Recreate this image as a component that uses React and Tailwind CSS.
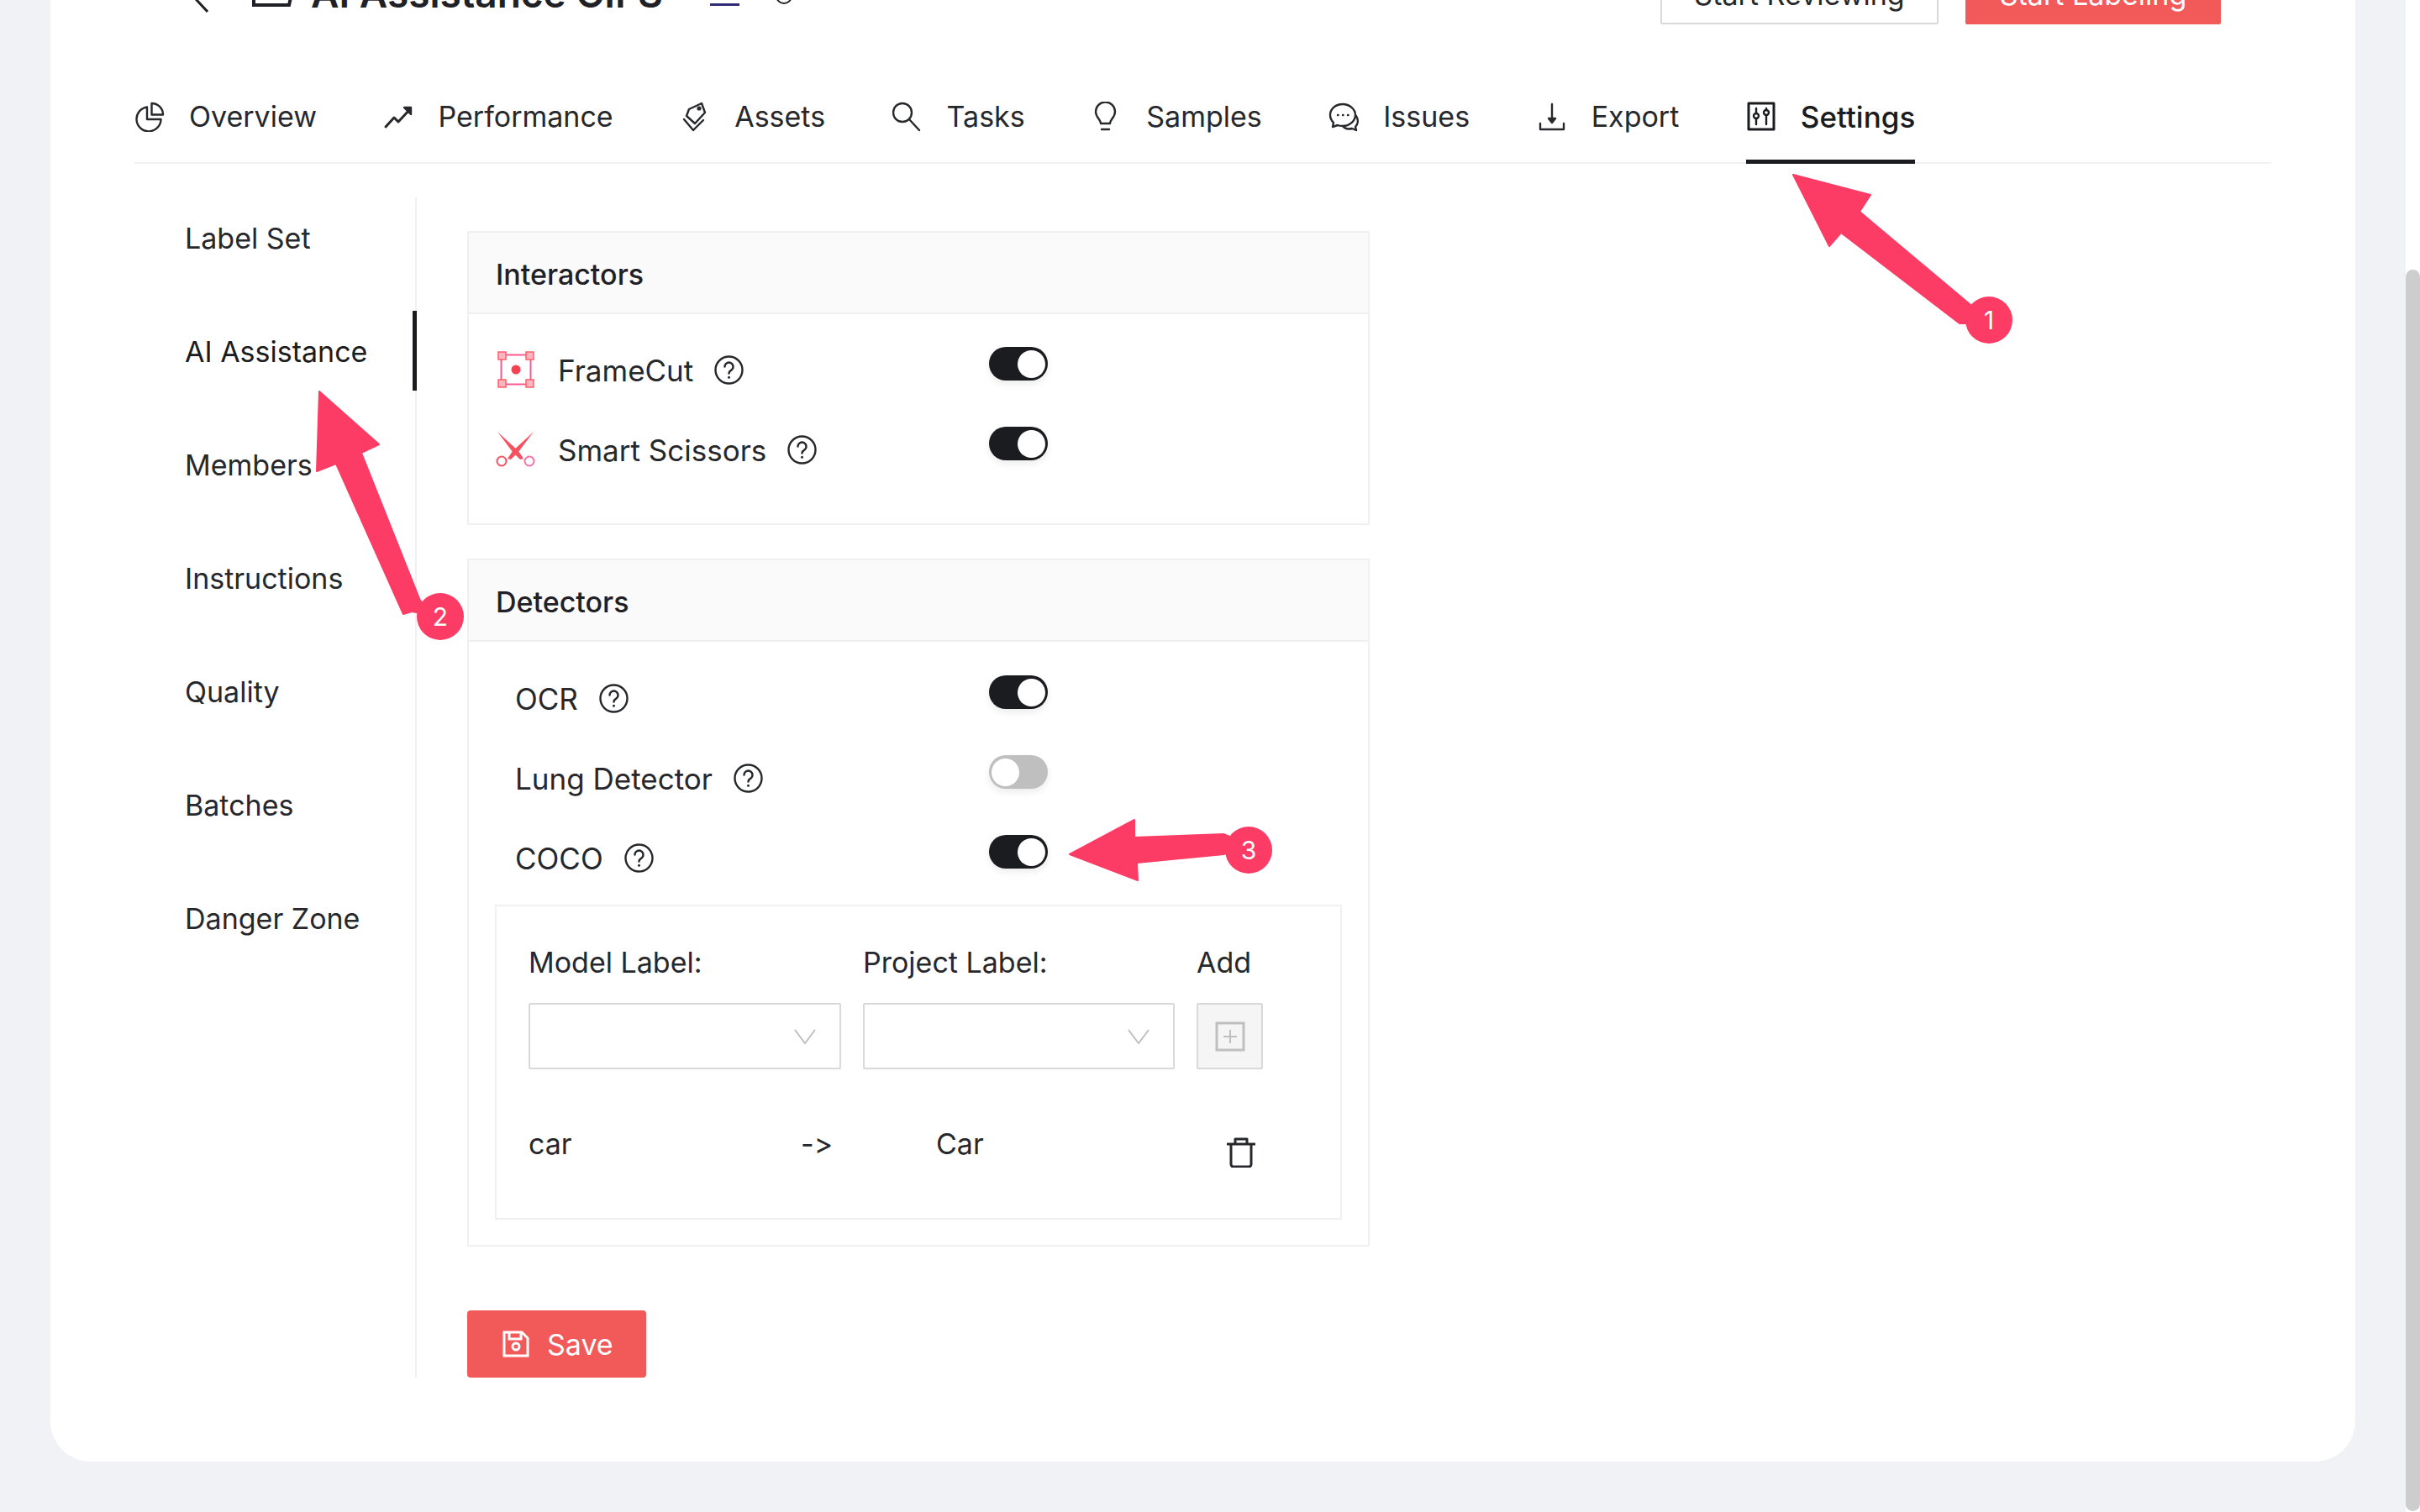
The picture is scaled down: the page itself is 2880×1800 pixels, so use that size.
import {} from 'react';

const font = { fontFamily: 'Inter, "Liberation Sans", sans-serif' };

const stroke = {
  fill: 'none',
  stroke: 'currentColor',
  strokeWidth: 2.4,
  strokeLinecap: 'round',
  strokeLinejoin: 'round',
};

const Svg = ({ className, children, box = '0 0 36 36' }) => (
  <svg viewBox={box} className={className} {...stroke}>
    {children}
  </svg>
);

const OverviewIcon = () => (
  <Svg className="w-[36px] h-[36px]">
    <path d="M15 6.5A14.5 14.5 0 1 0 31.5 21H15Z" />
    <path d="M20.5 2A13.5 13.5 0 0 1 34 15.5H20.5Z" />
  </Svg>
);
const PerformanceIcon = () => (
  <Svg className="w-[36px] h-[36px]">
    <path d="M3 30 13 19l5 5L32 9" strokeWidth="3" />
    <path d="M25 7h8v8Z" fill="currentColor" />
  </Svg>
);
const AssetsIcon = () => (
  <Svg className="w-[36px] h-[36px]">
    <path d="M11 9 26 2l4 11-12 13-10-9Z" />
    <circle cx="23" cy="8" r="1.4" />
    <path d="M5 21l11 13 12-12" />
  </Svg>
);
const TasksIcon = () => (
  <Svg className="w-[36px] h-[36px]">
    <circle cx="12" cy="13" r="11" />
    <path d="M20 21l12 13" />
  </Svg>
);
const SamplesIcon = () => (
  <Svg className="w-[36px] h-[36px]">
    <path d="M11 26c0-5-6-7-6-14a11.5 11.5 0 0 1 23 0c0 7-6 9-6 14Z" />
    <path d="M12 33h9" />
  </Svg>
);
const IssuesIcon = () => (
  <Svg className="w-[36px] h-[36px]">
    <path d="M17 3C8 3 2 9 2 16c0 4 2 7 4 9l-1 5 6-2c2 1 4 1 6 1 8 0 15-6 15-13S25 3 17 3Z" />
    <path d="M33 17c3 5 2 10-1 13l1 4-5-2c-4 1-8 1-11-3" />
    <path d="M11 16h.5M17 16h.5M23 16h.5" />
  </Svg>
);
const ExportIcon = () => (
  <Svg className="w-[36px] h-[36px]">
    <path d="M18 3v21" />
    <path d="M14 20h8l-4 5Z" fill="currentColor" />
    <path d="M4 26v7h28v-7" />
  </Svg>
);
const SettingsIcon = () => (
  <Svg className="w-[36px] h-[36px]">
    <rect x="3" y="2" width="30" height="31" strokeWidth="3" />
    <path d="M12 8v6M12 20v7M24 8v2M24 16v11" />
    <circle cx="12" cy="17" r="3" />
    <circle cx="24" cy="13" r="3" />
  </Svg>
);

const HelpIcon = () => (
  <Svg className="w-[35px] h-[35px] shrink-0" box="0 0 35 35">
    <circle cx="17.5" cy="17.5" r="16" />
    <path d="M12.5 13.5a5 5 0 1 1 7.5 4.4c-1.7 1-2.5 2-2.5 3.6" />
    <path d="M17.5 26.2v.1" strokeWidth="3" />
  </Svg>
);

const FrameCutIcon = () => (
  <svg viewBox="0 0 44 44" className="w-[44px] h-[44px] shrink-0 ml-[2px]">
    <rect x="4.5" y="4.5" width="35" height="35" fill="none" stroke="#fb5a8e" strokeWidth="2" />
    <rect x="1" y="1" width="9" height="9" fill="#fdb6c0" stroke="#ff5f6d" strokeWidth="1.5" />
    <rect x="34" y="1" width="9" height="9" fill="#fdb6c0" stroke="#ff5f6d" strokeWidth="1.5" />
    <rect x="1" y="34" width="9" height="9" fill="#fdb6c0" stroke="#ff5f6d" strokeWidth="1.5" />
    <rect x="34" y="34" width="9" height="9" fill="#fdb6c0" stroke="#ff5f6d" strokeWidth="1.5" />
    <circle cx="22" cy="22" r="5.5" fill="#f9414f" />
  </svg>
);

const ScissorsIcon = () => (
  <svg viewBox="0 0 47 42" className="w-[47px] h-[42px] shrink-0 -mr-[1px]">
    <path d="M2 0 27 23 33 32 29 33 20 24Z" fill="#f9505f" />
    <path d="M45 0 20 23 14 32 18 33 27 24Z" fill="#f9505f" />
    <circle cx="7" cy="35" r="5.5" fill="none" stroke="#f9505f" strokeWidth="2" />
    <circle cx="40" cy="35" r="5.5" fill="none" stroke="#fb6fa8" strokeWidth="2" />
  </svg>
);

const Toggle = ({ on = true }) => (
  <div
    className={`w-[70px] h-[40px] rounded-full flex items-center px-[3px] shadow-[0_4px_8px_rgba(0,0,0,0.08)] ${
      on ? 'bg-[#1a1c20] justify-end' : 'bg-[#bfbfbf] justify-start'
    }`}
  >
    <div className="w-[33px] h-[33px] rounded-full bg-white" />
  </div>
);

const tabs = [
  { label: 'Overview', icon: <OverviewIcon /> },
  { label: 'Performance', icon: <PerformanceIcon /> },
  { label: 'Assets', icon: <AssetsIcon /> },
  { label: 'Tasks', icon: <TasksIcon /> },
  { label: 'Samples', icon: <SamplesIcon /> },
  { label: 'Issues', icon: <IssuesIcon /> },
  { label: 'Export', icon: <ExportIcon /> },
  { label: 'Settings', icon: <SettingsIcon />, active: true },
];

const menu = ['Label Set', 'AI Assistance', 'Members', 'Instructions', 'Quality', 'Batches', 'Danger Zone'];

const Panel = ({ title, children, className = '' }) => (
  <section className={`w-[1074px] border-2 border-[#f0f0f0] ${className}`}>
    <div className="h-[97px] bg-[#fafafa] border-b-2 border-[#f0f0f0] px-[32px] pt-[4px] flex items-center font-medium text-[#1f2126]">
      {title}
    </div>
    {children}
  </section>
);

const FeatureRow = ({ icon, label, on, inset }) => (
  <div className="h-[95px] grid grid-cols-[619px_70px]">
    <div className={`h-[52px] mt-[26px] flex items-center text-[35px] ${inset ? 'pl-[55px]' : 'pl-[32px]'}`}>
      {icon}
      <span className={`${icon ? 'ml-[28px]' : ''} mr-[25px] pt-[2px] whitespace-nowrap`}>{label}</span>
      <HelpIcon />
    </div>
    <div className="mt-[25px]">
      <Toggle on={on} />
    </div>
  </div>
);

const SelectBox = () => (
  <div className="h-[79px] border-2 border-[#d9d9d9] rounded-[2px] flex items-center justify-end pr-[28px]">
    <svg viewBox="0 0 26 18" className="w-[26px] h-[18px]" fill="none" stroke="#bfbfbf" strokeWidth="2">
      <path d="M1 1l12 16L25 1" />
    </svg>
  </div>
);

// annotation arrows that sit on top of the screenshot
const arrows = [
  {
    n: '1',
    cx: 2367,
    cy: 381,
    points: '2134,208 2226,232 2213,252 2344,362 2370,385 2332,385 2191,277 2177,293',
  },
  {
    n: '2',
    cx: 524,
    cy: 734,
    points: '380,466 451,529 430,539 500,715 524,734 490,728 480,731 400,552 377,561',
  },
  {
    n: '3',
    cx: 1486,
    cy: 1012,
    points: '1273,1017 1350,976 1350,997 1456,993 1485,1005 1456,1017 1353,1027 1354,1048',
  },
];

const Annotations = () => (
  <svg viewBox="0 0 2880 1800" className="absolute inset-0 w-[2880px] h-[1800px] pointer-events-none">
    {arrows.map((a) => (
      <g key={a.n}>
        <polygon points={a.points} fill="#fd3c65" stroke="#fd3c65" strokeWidth="2" strokeLinejoin="round" />
        <circle cx={a.cx} cy={a.cy} r="28" fill="#fd3c65" />
        <text x={a.cx} y={a.cy + 11} textAnchor="middle" fontSize="30" fill="#fff" style={font}>
          {a.n}
        </text>
      </g>
    ))}
  </svg>
);

export default function App() {
  return (
    <div
      style={font}
      className="relative w-[2880px] h-[1800px] overflow-hidden flex bg-white text-[34px] leading-[52px] text-[#26282c] [font-feature-settings:'calt'_0]"
    >
      <main className="w-[2863px] h-full bg-[#f0f2f6] px-[60px]">
        <div className="h-[1740px] bg-white rounded-b-[48px] px-[100px] overflow-hidden">
          {/* Header, scrolled mostly out of view */}
          <div className="-mt-[41px] h-[70px] flex items-end justify-between pr-[60px]">
            <div className="flex items-end h-full">
              <svg viewBox="0 0 16 30" className="ml-[72px] w-[16px] h-[30px] mb-[14px]" fill="none" stroke="#1f2126" strokeWidth="3">
                <path d="M15 1 2 15l13 14" />
              </svg>
              <svg viewBox="0 0 54 40" className="ml-[52px] w-[54px] h-[40px] mb-[21px]" fill="none" stroke="#1f2126" strokeWidth="4">
                <path d="M2 2h50l-8 36H2Z" />
              </svg>
              <span className="ml-[16px] text-[46px] leading-[60px] font-semibold text-[#1f2126] mb-[7px] whitespace-nowrap">
                AI Assistance CIFS
              </span>
              <div className="ml-[56px] w-[35px] h-[3px] bg-[#2f2a7a] mb-[22px]" />
              <div className="ml-[43px] w-[20px] h-[20px] rounded-full border-2 border-[#1f2126] mb-[24px]" />
            </div>
            <div className="flex gap-[32px] h-full">
              <button className="w-[331px] border-2 border-[#d9d9d9] rounded-[2px] bg-white text-[#26282c]">
                Start Reviewing
              </button>
              <button className="w-[304px] rounded-[2px] bg-[#f25a5a] text-white">Start Labeling</button>
            </div>
          </div>

          {/* Tabs */}
          <nav className="mt-[56px] h-[110px] border-b-2 border-[#f0f0f0] flex gap-[79.5px]">
            {tabs.map((t) => (
              <div
                key={t.label}
                className={`flex items-center gap-[29px] h-[110px] ${
                  t.active ? 'border-b-[5px] border-[#1a1c20] font-medium text-[35px] text-[#1a1c20] pt-[2px]' : 'pb-[3px]'
                }`}
              >
                {t.icon}
                <span>{t.label}</span>
              </div>
            ))}
          </nav>

          <div className="mt-[40px] flex h-[1405px]">
            {/* Side menu */}
            <aside className="w-[336px] border-r-2 border-[#f0f0f0] flex flex-col gap-[40px]">
              {menu.map((m) => (
                <div
                  key={m}
                  className={`h-[95px] pl-[60px] pt-[2px] flex items-center ${
                    m === 'AI Assistance' ? 'border-r-[5px] border-[#1a1c20] -mr-[2px] text-[#1a1c20]' : ''
                  }`}
                >
                  {m}
                </div>
              ))}
            </aside>

            {/* Settings panels */}
            <div className="pl-[60px] pt-[40px]">
              <Panel title="Interactors" className="h-[350px]">
                <div className="pt-[14px]">
                  <FeatureRow icon={<FrameCutIcon />} label="FrameCut" />
                  <FeatureRow icon={<ScissorsIcon />} label="Smart Scissors" />
                </div>
              </Panel>

              <Panel title="Detectors" className="mt-[40px]">
                <div className="pt-[15px]">
                  <FeatureRow inset label="OCR" />
                  <FeatureRow inset label="Lung Detector" on={false} />
                  <FeatureRow inset label="COCO" />
                </div>
                <div className="mx-[31px] mt-[13px] mb-[30px] border-2 border-[#f0f0f0] pl-[38px] pt-[41px] pb-[62px]">
                  <div className="grid grid-cols-[372px_371px_79px] gap-x-[26px] gap-y-[22px]">
                    <div>Model Label:</div>
                    <div>Project Label:</div>
                    <div>Add</div>
                    <SelectBox />
                    <SelectBox />
                    <div className="h-[79px] border-2 border-[#d9d9d9] rounded-[2px] bg-[#f5f5f5] flex items-center justify-center">
                      <svg viewBox="0 0 36 36" className="w-[36px] h-[36px]" fill="none" stroke="#bfbfbf" strokeWidth="3">
                        <rect x="2" y="2" width="32" height="32" />
                        <path d="M18 10v16M10 18h16" strokeWidth="2" />
                      </svg>
                    </div>
                  </div>
                  <div className="mt-[63px] flex h-[52px]">
                    <span className="w-[324px]">car</span>
                    <span className="w-[161px]">-&gt;</span>
                    <span className="w-[346px]">Car</span>
                    <svg viewBox="0 0 34 36" className="w-[34px] h-[36px] mt-[18px]" {...stroke} strokeWidth="3">
                      <path d="M1 8h32M5 8v24a3 3 0 0 0 3 3h18a3 3 0 0 0 3-3V8M10 8V2h14v6" />
                    </svg>
                  </div>
                </div>
              </Panel>

              <button className="mt-[76px] w-[213px] h-[80px] rounded-[4px] bg-[#f25a5a] text-white flex items-center pl-[42px] gap-[21px]">
                <svg viewBox="0 0 32 32" className="w-[32px] h-[32px]" fill="none" stroke="#fff" strokeWidth="3">
                  <path d="M2 2h21l7 7v21H2Z" />
                  <path d="M8 2v8h14V2" />
                  <circle cx="16" cy="19" r="4" />
                </svg>
                <span className="pt-[2px]">Save</span>
              </button>
            </div>
          </div>
        </div>
      </main>

      {/* Browser scrollbar */}
      <div className="w-[17px] h-full pt-[321px]">
        <div className="h-[1478px] rounded-full bg-[#cdcdcd]" />
      </div>

      <Annotations />
    </div>
  );
}
